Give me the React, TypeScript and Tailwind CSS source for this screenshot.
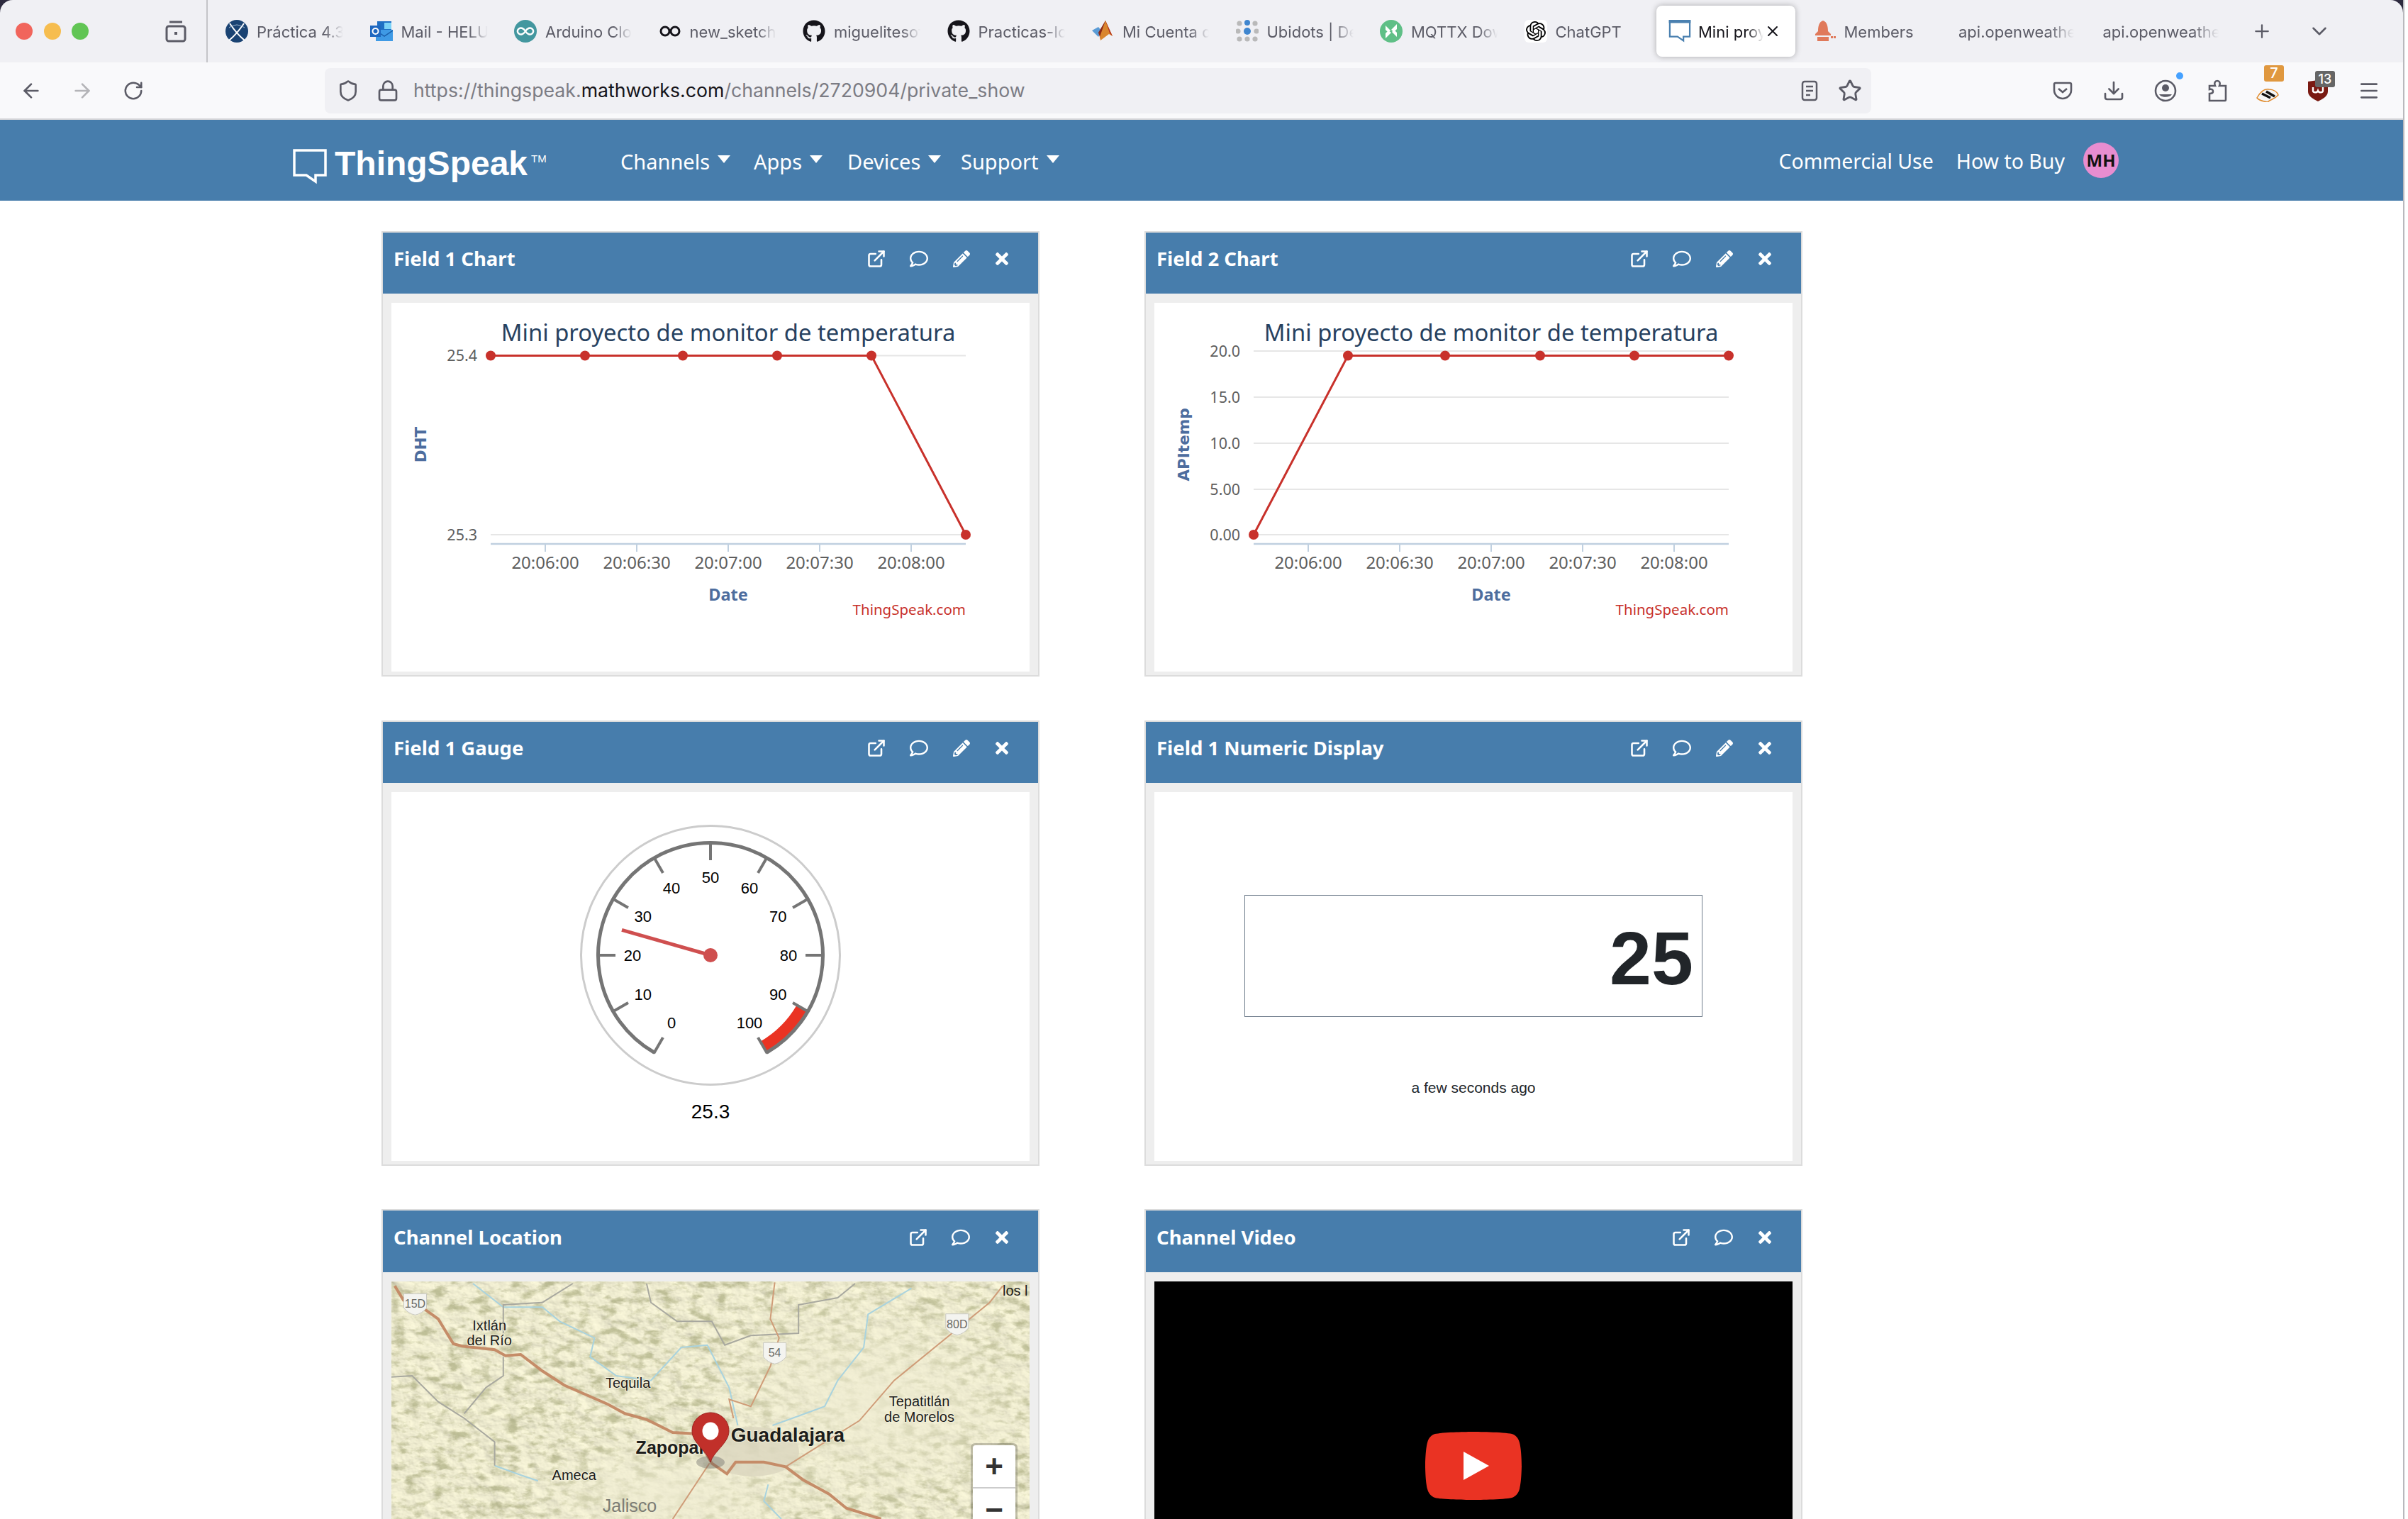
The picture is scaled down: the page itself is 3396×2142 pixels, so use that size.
import { ArrowLeft, ArrowRight, ChevronDown, Download, ExternalLink, Lock, Menu, Plus, RotateCw, Shield, Star, X } from "lucide-react";
import { FaGithub, FaPencilAlt, FaRegComment, FaTimes } from "react-icons/fa";
import { SiOpenai } from "react-icons/si";
import type { ReactNode } from "react";

const tabText = "mt-[3px] font-['Inter',sans-serif] text-[22px] text-[#5b5b66] whitespace-nowrap overflow-hidden [mask-image:linear-gradient(to_right,black_78%,transparent)]";

function ThingSpeakBubble({ className, color, bar }: { className: string; color: string; bar?: boolean }) {
  return (
    <svg viewBox="0 0 48 50" className={className}>
      <path d="M2 2 H46 V37 H32 V46 L19 37 H2 Z" fill="none" stroke={color} strokeWidth="3.5" />
      {bar && <rect x="0" y="0" width="48" height="7" fill={color} />}
    </svg>
  );
}

function Favicon({ kind }: { kind: string }) {
  const cls = "w-8 h-8 shrink-0";
  if (kind === "practica")
    return (
      <svg viewBox="0 0 32 32" className={cls}>
        <circle cx="16" cy="16" r="16" fill="#1a4373" />
        <path d="M6 5 Q16 20 27 29 M26 5 Q16 20 5 29" stroke="#fff" strokeWidth="2" fill="none" />
        <path d="M5 11 Q16 3 27 11" stroke="#9fb6cf" strokeWidth="1" fill="none" />
      </svg>
    );
  if (kind === "outlook")
    return (
      <svg viewBox="0 0 32 32" className={cls}>
        <rect x="10" y="2" width="20" height="15" fill="#1e6fc4" />
        <rect x="20" y="4" width="10" height="9" fill="#7ad2f7" />
        <path d="M8 14 L32 14 L32 30 L8 30 Z" fill="#3f9ae5" />
        <path d="M8 15 L20 23 L32 15" fill="none" stroke="#1a5fab" strokeWidth="1.5" />
        <rect x="0" y="8" width="15" height="16" fill="#1f68c0" />
        <circle cx="7.5" cy="16" r="4" fill="none" stroke="#fff" strokeWidth="2" />
      </svg>
    );
  if (kind === "arduino")
    return (
      <svg viewBox="0 0 32 32" className={cls}>
        <circle cx="16" cy="16" r="16" fill="#43979f" />
        <path d="M16 16 C13 11 9 11 7.5 12 C4 14 4 18 7.5 20 C9 21 13 21 16 16 C19 11 23 11 24.5 12 C28 14 28 18 24.5 20 C23 21 19 21 16 16 Z" fill="none" stroke="#fff" strokeWidth="2.4" />
      </svg>
    );
  if (kind === "sketch")
    return (
      <svg viewBox="0 0 32 32" className={cls}>
        <circle cx="9" cy="16" r="6" fill="none" stroke="#15141a" strokeWidth="3" />
        <circle cx="23" cy="16" r="6" fill="none" stroke="#15141a" strokeWidth="3" />
      </svg>
    );
  if (kind === "github") return <FaGithub className="w-8 h-8 shrink-0 text-[#15141a]" />;
  if (kind === "matlab")
    return (
      <svg viewBox="0 0 32 32" className={cls}>
        <path d="M1 15 L10 10 L15 16 L10 24 Z" fill="#5a9bd5" />
        <path d="M10 18 L20 1 L24 12 L13 27 Z" fill="#8d2a18" />
        <path d="M20 1 L30 23 L25 20 L13 29 L12 24 Z" fill="#d9862e" />
        <path d="M20 1 L30 23 L26 19 Z" fill="#b5341c" />
      </svg>
    );
  if (kind === "ubidots")
    return (
      <svg viewBox="0 0 32 32" className={cls}>
        {[[5, 5], [27, 5], [3, 16], [29, 16], [5, 27], [27, 27], [16, 27]].map(([x, y]) => (
          <circle key={`${x}-${y}`} cx={x} cy={y} r="3.6" fill="#b9b9b9" />
        ))}
        <circle cx="16" cy="4" r="4" fill="#3f86cf" />
        <circle cx="16" cy="16" r="5" fill="#3f86cf" />
      </svg>
    );
  if (kind === "mqttx")
    return (
      <svg viewBox="0 0 32 32" className={cls}>
        <circle cx="16" cy="16" r="16" fill="#5fbf86" />
        <path d="M8 8 L15 15 L12 18 L8 14 Z M24 6 L24 13 L20 17 L16 14 Z M8 26 L8 19 L12 15 L16 18 Z M24 24 L17 17 L20 14 L24 18 Z" fill="#fff" />
      </svg>
    );
  if (kind === "chatgpt")
    return (
      <div className="w-8 h-8 shrink-0 rounded-md bg-white flex items-center justify-center">
        <SiOpenai className="w-7 h-7 text-black" />
      </div>
    );
  if (kind === "mini") return <ThingSpeakBubble className={cls} color="#4a80b0" bar />;
  if (kind === "members")
    return (
      <svg viewBox="0 0 32 32" className={cls}>
        <path d="M14 1 C8 3 7 10 7 16 L3 20 L3 22 L25 22 L25 20 L21 16 C21 10 20 3 14 1 Z" fill="#e0795a" />
        <rect x="6" y="24" width="16" height="6" fill="#e0795a" />
        <rect x="25" y="23" width="3" height="3" fill="#e0795a" />
        <rect x="29" y="23" width="3" height="3" fill="#e0795a" />
      </svg>
    );
  return null;
}

function Tab({ kind, label, active }: { kind?: string; label: string; active?: boolean }) {
  if (active)
    return (
      <div className="w-[196px] h-[72px] mr-[7.5px] pl-[17px] flex items-center rounded-lg bg-white shadow-[0_0_8px_rgba(0,0,0,0.3)]">
        <Favicon kind={kind!} />
        <span className="mt-[3px] ml-[10px] w-[92px] font-['Inter',sans-serif] text-[22px] text-[#15141a] whitespace-nowrap overflow-hidden [mask-image:linear-gradient(to_right,black_75%,transparent)]">{label}</span>
        <X className="w-[24px] h-[24px] ml-px text-[#15141a] shrink-0" strokeWidth={2} />
      </div>
    );
  return (
    <div className="w-[203.5px] h-[72px] pl-[17px] flex items-center gap-3 shrink-0">
      {kind && <Favicon kind={kind} />}
      <span className={`${kind ? "w-[122px]" : "w-[163px] ml-[2px]"} ${tabText}`}>{label}</span>
    </div>
  );
}

function TabBar() {
  return (
    <div className="h-[88px] bg-[#2d2a3e]">
      <div className="h-full flex items-center bg-[#f0f0f4] rounded-t-[18px]">
        <div className="w-[293px] h-full shrink-0 flex items-center border-r-2 border-[#c4c4c8] pl-[22px]">
          <div className="w-[24px] h-[24px] rounded-full bg-[#f1655c]" />
          <div className="w-[24px] h-[24px] rounded-full bg-[#f6bd4f] ml-[16px]" />
          <div className="w-[24px] h-[24px] rounded-full bg-[#61c554] ml-[15px]" />
          <svg viewBox="0 0 32 32" className="w-8 h-8 ml-[107px] text-[#5b5b66]" fill="none" stroke="currentColor" strokeWidth="3">
            <rect x="3" y="9" width="26" height="21" rx="3" />
            <path d="M7 3 H25" />
            <rect x="14" y="17" width="4" height="4" fill="currentColor" stroke="none" />
          </svg>
        </div>
        <div className="flex items-center pl-[8px] h-full">
          <Tab kind="practica" label="Práctica 4.3 Mini" />
          <Tab kind="outlook" label="Mail - HELUS" />
          <Tab kind="arduino" label="Arduino Cloud" />
          <Tab kind="sketch" label="new_sketch_1" />
          <Tab kind="github" label="miguelitesoft" />
          <Tab kind="github" label="Practicas-IoT" />
          <Tab kind="matlab" label="Mi Cuenta de" />
          <Tab kind="ubidots" label="Ubidots | Dev" />
          <Tab kind="mqttx" label="MQTTX Down" />
          <Tab kind="chatgpt" label="ChatGPT" />
          <Tab kind="mini" label="Mini proyecto" active />
          <Tab kind="members" label="Members" />
          <Tab label="api.openweather" />
          <Tab label="api.openweather" />
          <Plus className="w-[30px] h-[30px] text-[#5b5b66] ml-[25px] shrink-0" strokeWidth={1.8} />
          <ChevronDown className="w-[34px] h-[34px] text-[#5b5b66] ml-[49px] shrink-0" strokeWidth={1.8} />
        </div>
      </div>
    </div>
  );
}

function Toolbar() {
  return (
    <div className="h-[81px] bg-[#f9f9fb] border-b-2 border-[#d4d4d8] flex items-center relative">
      <ArrowLeft className="w-8 h-8 ml-[28px] text-[#5b5b66]" strokeWidth={2} />
      <ArrowRight className="w-8 h-8 ml-[40px] text-[#b4b4b8]" strokeWidth={2} />
      <RotateCw className="w-[30px] h-[30px] ml-[41px] text-[#5b5b66]" strokeWidth={2} />
      <div className="ml-[255px] w-[2181px] h-[64px] rounded-lg bg-[#f0f0f4] flex items-center pl-[17px] pr-[13px]">
        <Shield className="w-[32px] h-[32px] text-[#5b5b66]" strokeWidth={2} />
        <Lock className="w-[32px] h-[32px] ml-[24px] text-[#5b5b66]" strokeWidth={2} />
        <div className="ml-[20px] font-['Inter',sans-serif] text-[26.7px] text-[#7c7c84] whitespace-nowrap">
          https://thingspeak.<span className="text-[#15141a]">mathworks.com</span>/channels/2720904/private_show
        </div>
        <svg viewBox="0 0 24 30" className="w-[24px] h-[30px] ml-auto text-[#5b5b66]" fill="none" stroke="currentColor" strokeWidth="2.5">
          <rect x="2" y="2" width="20" height="26" rx="3" />
          <path d="M7 9 H17 M7 15 H17 M7 21 H13" />
        </svg>
        <Star className="w-[34px] h-[34px] ml-[28px] text-[#5b5b66]" strokeWidth={2} />
      </div>
      <div className="ml-[256px] flex items-center relative">
        <svg viewBox="0 0 28 26" className="w-[28px] h-[26px] text-[#5b5b66]" fill="none" stroke="currentColor" strokeWidth="2.6">
          <path d="M4 2 H24 C25.5 2 26 3 26 4 V12 C26 19 20 24 14 24 C8 24 2 19 2 12 V4 C2 3 2.5 2 4 2 Z" />
          <path d="M8 10 L14 15 L20 10" />
        </svg>
        <Download className="w-[32px] h-[32px] ml-[42px] text-[#5b5b66]" strokeWidth={2} />
        <svg viewBox="0 0 32 32" className="w-[32px] h-[32px] ml-[41px] text-[#5b5b66]">
          <circle cx="16" cy="16" r="14" fill="none" stroke="currentColor" strokeWidth="2.6" />
          <circle cx="16" cy="12" r="5" fill="currentColor" />
          <path d="M7 21 H25 C22 26 10 26 7 21 Z" fill="currentColor" />
        </svg>
        <div className="absolute left-[174px] top-[-10px] w-[10px] h-[10px] rounded-full bg-[#45a1ff]" />
        <svg viewBox="0 0 28 32" className="w-[28px] h-[32px] ml-[43px] text-[#5b5b66]" fill="none" stroke="currentColor" strokeWidth="2.6">
          <path d="M3 30 H25 C26 30 26 29 26 28 V9 H17 C19 5 17 2 14 2 C11 2 9 5 11 9 H3 V14 C7 13 8 15 8 17 C8 19 7 20 3 20 Z" />
        </svg>
        <div className="relative ml-[41px] w-[32px] h-[32px]">
          <svg viewBox="0 0 32 32" className="w-[32px] h-[32px]">
            <path d="M1 26 C6 17 12 13 18 14 C25 14 30 18 31 22 C26 28 20 28 16 32 C10 31 4 30 1 26 Z" fill="#f5f5f5" stroke="#e08a2c" strokeWidth="1.5" />
            <path d="M8 20 L20 26 M14 17 L26 24" stroke="#111" strokeWidth="3.5" />
          </svg>
          <div className="absolute left-[11px] top-[-20px] w-[28px] h-[23px] rounded-[3px] bg-[#e0983f] text-white text-[20px] leading-[23px] text-center font-['Inter',sans-serif] font-medium">7</div>
        </div>
        <div className="relative ml-[41px] w-[28px] h-[30px]">
          <svg viewBox="0 0 28 30" className="w-[28px] h-[30px]">
            <path d="M0 2 L14 0 L28 2 V16 C28 23 20 27 14 30 C8 27 0 23 0 16 Z" fill="#7a1a12" />
            <path d="M7 10 V15 C7 18 13 18 14 15 C15 18 21 18 21 15 V10" fill="none" stroke="#fff" strokeWidth="2.4" />
          </svg>
          <div className="absolute left-[10px] top-[-13px] w-[28px] h-[23px] rounded-[3px] bg-[#666666] text-white text-[18px] leading-[23px] text-center font-['Inter',sans-serif] font-medium">13</div>
        </div>
        <Menu className="w-[32px] h-[32px] ml-[42px] text-[#5b5b66]" strokeWidth={2} />
      </div>
    </div>
  );
}

function NavLink({ label, width }: { label: string; width: string }) {
  return (
    <div className={`${width} pt-[3px] flex items-center gap-[11px] text-[29px] text-white`}>
      <span>{label}</span>
      <div className="w-0 h-0 border-x-[9px] border-t-[11px] border-x-transparent border-t-white mb-[6px]" />
    </div>
  );
}

function Nav() {
  return (
    <div className="h-[114px] bg-[#477dac] flex items-center pl-[413px] pr-[401px] font-['Noto_Sans',sans-serif]">
      <div className="w-[462px] h-[64px] flex items-start">
        <ThingSpeakBubble className="w-[48px] h-[50px] mt-[16px] shrink-0" color="#fff" />
        <span className="ml-[11px] mt-[10px] font-['Liberation_Sans',sans-serif] font-bold text-[48px] leading-[54px] text-white">ThingSpeak</span>
        <span className="ml-[5px] mt-[21px] font-['Liberation_Sans',sans-serif] text-[15px] leading-[18px] text-white">TM</span>
      </div>
      <NavLink label="Channels" width="w-[188px]" />
      <NavLink label="Apps" width="w-[132px]" />
      <NavLink label="Devices" width="w-[160px]" />
      <NavLink label="Support" width="w-[150px]" />
      <div className="ml-auto pt-[2px] flex items-center text-[28.5px] text-white">
        <span>Commercial Use</span>
        <span className="ml-[32px]">How to Buy</span>
        <div className="ml-[26px] -mt-[2px] w-[50px] h-[50px] rounded-full bg-[#e88dd0] text-[#111] text-[24px] font-bold flex items-center justify-center">MH</div>
      </div>
    </div>
  );
}

function Card({ title, edit = true, tall, children }: { title: string; edit?: boolean; tall?: boolean; children: ReactNode }) {
  return (
    <div className="h-[628px] border-2 border-[#dcdcdc] bg-[#eeeeee] flex flex-col">
      <div className={`${tall ? "h-[87px] pt-[19px]" : "h-[86px] pt-[18px]"} bg-[#477dac] text-white flex items-start pl-[15px] pr-[39px] shrink-0`}>
        <span className="font-['Noto_Sans',sans-serif] font-bold text-[27.5px] leading-[38px]">{title}</span>
        <div className="ml-auto flex items-center h-[38px]">
          <ExternalLink className="w-[28px] h-[28px]" strokeWidth={2.2} />
          <FaRegComment className="w-[26px] h-[26px] ml-[33px]" />
          {edit && <FaPencilAlt className="w-[24px] h-[24px] ml-[35px]" />}
          <FaTimes className="w-[24px] h-[26px] ml-[33px]" />
        </div>
      </div>
      <div className="flex-1 mx-3 mt-[13px] mb-[5px] bg-white relative overflow-hidden">{children}</div>
    </div>
  );
}

const labelFont = "Noto Sans, sans-serif";
const xTicks = [
  { x: 217, t: "20:06:00" },
  { x: 346, t: "20:06:30" },
  { x: 475, t: "20:07:00" },
  { x: 604, t: "20:07:30" },
  { x: 733, t: "20:08:00" },
];

function Chart({ yLabel, yLabelY, grid, points }: { yLabel: string; yLabelY: number; grid: { y: number; t: string }[]; points: number[][] }) {
  return (
    <svg viewBox="0 0 900 520" className="w-[900px] h-[520px] block">
      <text x="475" y="54" textAnchor="middle" fontFamily={labelFont} fontSize="32.8" fill="#27415f">Mini proyecto de monitor de temperatura</text>
      {grid.map((g) => (
        <g key={g.t}>
          <line x1="140" x2="810" y1={g.y} y2={g.y} stroke="#e6e6e6" strokeWidth="2" />
          <text x="121" y={g.y + 7.5} textAnchor="end" fontFamily={labelFont} fontSize="21.5" fill="#5e5e5e">{g.t}</text>
        </g>
      ))}
      <line x1="140" x2="810" y1="340" y2="340" stroke="#c0d0e0" strokeWidth="2.5" />
      {xTicks.map((t) => (
        <g key={t.t}>
          <line x1={t.x} x2={t.x} y1="340" y2="351" stroke="#c0d0e0" strokeWidth="2" />
          <text x={t.x} y="375" textAnchor="middle" fontFamily={labelFont} fontSize="24" fill="#5e5e5e">{t.t}</text>
        </g>
      ))}
      <text transform={`translate(49 ${yLabelY}) rotate(-90)`} textAnchor="middle" fontFamily="DejaVu Sans, sans-serif" fontWeight="700" fontSize="21.5" fill="#4d6d9e">{yLabel}</text>
      <text x="475" y="420" textAnchor="middle" fontFamily={labelFont} fontWeight="700" fontSize="23.5" fill="#4d6d9e">Date</text>
      <text x="810" y="440" textAnchor="end" fontFamily={labelFont} fontSize="20.5" fill="#c8312b">ThingSpeak.com</text>
      <polyline points={points.map((p) => p.join(",")).join(" ")} fill="none" stroke="#c8312b" strokeWidth="3" />
      {points.map((p) => (
        <circle key={p[0]} cx={p[0]} cy={p[1]} r="7" fill="#c8312b" />
      ))}
    </svg>
  );
}

function polar(r: number, deg: number) {
  const a = (deg * Math.PI) / 180;
  return [450 + r * Math.sin(a), 230 - r * Math.cos(a)];
}

function arcPath(r: number, from: number, to: number) {
  const [x1, y1] = polar(r, from);
  const [x2, y2] = polar(r, to);
  return `M${x1} ${y1} A${r} ${r} 0 ${to - from > 180 ? 1 : 0} 1 ${x2} ${y2}`;
}

function Gauge() {
  const values = [0, 10, 20, 30, 40, 50, 60, 70, 80, 90, 100];
  const [nx, ny] = polar(130, -150 + 3 * 25.3);
  return (
    <svg viewBox="0 0 900 520" className="w-[900px] h-[520px] block">
      <circle cx="450" cy="230" r="182.5" fill="none" stroke="#cccccc" strokeWidth="3" />
      <path d={arcPath(148.5, 120, 150)} fill="none" stroke="#ea3323" strokeWidth="16" />
      <path d={arcPath(158.5, -150, 150)} fill="none" stroke="#757575" strokeWidth="5" />
      {values.map((v) => {
        const deg = -150 + v * 3;
        const [x1, y1] = polar(134, deg);
        const [x2, y2] = polar(160, deg);
        const [tx, ty] = polar(110, deg);
        return (
          <g key={v}>
            <line x1={x1} y1={y1} x2={x2} y2={y2} stroke="#757575" strokeWidth="4" />
            <text x={tx} y={ty + 8} textAnchor="middle" fontFamily="Liberation Sans, sans-serif" fontSize="22" fill="#000">{v}</text>
          </g>
        );
      })}
      <line x1="450" y1="230" x2={nx} y2={ny} stroke="#cf4f4f" strokeWidth="5" />
      <circle cx="450" cy="230" r="10" fill="#cf4f4f" />
      <text x="450" y="460" textAnchor="middle" fontFamily="Liberation Sans, sans-serif" fontSize="28" fill="#000">25.3</text>
    </svg>
  );
}

function NumericDisplay() {
  return (
    <div className="h-full flex flex-col items-center font-['Liberation_Sans',sans-serif]">
      <div className="mt-[145px] w-[646px] h-[172px] border border-[#6f7d8c] flex items-center justify-end pr-[12px] pt-[6px]">
        <span className="text-[106px] font-bold leading-none text-[#212529]">25</span>
      </div>
      <div className="mt-[88px] text-[21px] leading-[24px] text-[#212529]">a few seconds ago</div>
    </div>
  );
}

// positions read off the zoomed crop: x = px / 1.633 - 32, y = py / 3 - 107
const mapPt = ([x, y]: number[]) => `${(x / 1.633 - 32).toFixed(1)},${(y / 3 - 107).toFixed(1)}`;
const line = (pts: number[][]) => pts.map(mapPt).join(" ");

const mainRoad = [[60, 340], [80, 400], [130, 440], [160, 480], [195, 585], [215, 595], [290, 610], [315, 635], [350, 630], [400, 700], [450, 760], [550, 840], [590, 880], [640, 905], [700, 960], [750, 965], [790, 1090], [825, 1135], [845, 1085], [910, 1085], [960, 1105], [1000, 1160], [1060, 1220], [1100, 1280], [1180, 1326]];
const sideRoads = [
  [[935, 325], [925, 480], [945, 560], [925, 680], [880, 850], [830, 820], [840, 900]],
  [[1460, 340], [1430, 410], [1350, 530], [1210, 740], [1130, 910], [1060, 990], [960, 1105]],
  [[785, 1090], [700, 1326]],
];
const rivers = [
  [[240, 330], [310, 430], [400, 430], [440, 490], [520, 560], [510, 640], [570, 720], [650, 740], [720, 600], [780, 590], [830, 770], [850, 930]],
  [[1250, 350], [1150, 460], [1140, 600], [1080, 740], [1050, 850], [990, 890], [930, 930]],
  [[920, 1180], [910, 1250], [950, 1326]],
  [[290, 1100], [350, 1140], [390, 1165]],
];
const borders = [
  [[470, 330], [400, 410], [310, 420], [310, 540]],
  [[640, 330], [650, 410], [710, 490], [790, 490], [820, 590], [880, 550], [990, 540], [990, 420], [1080, 390], [1120, 330]],
  [[52, 725], [100, 720], [160, 830], [220, 900], [290, 1000], [290, 1100]],
  [[310, 640], [310, 720], [270, 770], [220, 880]],
];
const shields = [
  { x: 107, y: 415, t: "15D" },
  { x: 1355, y: 500, t: "80D" },
  { x: 935, y: 622, t: "54" },
];
const places = [
  { x: 278, y: 505, t: "Ixtlán", s: 20 },
  { x: 278, y: 568, t: "del Río", s: 20 },
  { x: 597, y: 748, t: "Tequila", s: 20 },
  { x: 1268, y: 828, t: "Tepatitlán", s: 20 },
  { x: 1268, y: 892, t: "de Morelos", s: 20 },
  { x: 473, y: 1138, t: "Ameca", s: 20 },
  { x: 700, y: 1022, t: "Zapopan", s: 25 },
  { x: 965, y: 968, t: "Guadalajara", s: 28 },
];

function MapView() {
  return (
    <>
      <svg viewBox="0 0 900 340" className="w-[900px] h-[340px] block">
        <defs>
          <filter id="relief" x="0" y="0" width="100%" height="100%">
            <feTurbulence type="fractalNoise" baseFrequency="0.035 0.05" numOctaves="4" seed="7" />
            <feDiffuseLighting surfaceScale="2.5" lightingColor="#f1eed2" diffuseConstant="1.12">
              <feDistantLight azimuth="315" elevation="62" />
            </feDiffuseLighting>
          </filter>
          <filter id="olive" x="0" y="0" width="100%" height="100%" colorInterpolationFilters="sRGB">
            <feTurbulence type="fractalNoise" baseFrequency="0.05 0.09" numOctaves="4" seed="3" />
            <feColorMatrix values="0 0 0 0 0.6  0 0 0 0 0.61  0 0 0 0 0.42  2.6 2 0 0 -2.2" />
          </filter>
          <radialGradient id="flat" cx="0.5" cy="0.5" r="0.5">
            <stop offset="0" stopColor="#efecd2" stopOpacity="0.85" />
            <stop offset="1" stopColor="#efecd2" stopOpacity="0" />
          </radialGradient>
        </defs>
        <rect width="900" height="340" fill="#ecead0" />
        <rect width="900" height="340" filter="url(#relief)" />
        <rect width="900" height="340" filter="url(#olive)" opacity="0.55" />
        <ellipse cx="680" cy="170" rx="260" ry="170" fill="url(#flat)" />
        <ellipse cx="400" cy="300" rx="220" ry="90" fill="url(#flat)" />
        <ellipse cx="510" cy="240" rx="65" ry="35" fill="#dcd7c0" opacity="0.85" />
        {rivers.map((r, i) => (
          <polyline key={i} points={line(r)} fill="none" stroke="#a9d3de" strokeWidth="2" />
        ))}
        {borders.map((r, i) => (
          <polyline key={i} points={line(r)} fill="none" stroke="#a8a89f" strokeWidth="2" />
        ))}
        {sideRoads.map((r, i) => (
          <polyline key={i} points={line(r)} fill="none" stroke="#cf9c78" strokeWidth="2" />
        ))}
        <polyline points={line(mainRoad)} fill="none" stroke="#c58c68" strokeWidth="4" />
        {shields.map((s) => {
          const [x, y] = mapPt([s.x, s.y]).split(",").map(Number);
          return (
            <g key={s.t}>
              <path d={`M${x - 16} ${y - 14} H${x + 16} V${y + 6} Q${x + 10} ${y + 14} ${x} ${y + 16} Q${x - 10} ${y + 14} ${x - 16} ${y + 6} Z`} fill="#f4f4f0" stroke="#c9c9c2" />
              <text x={x} y={y + 6} textAnchor="middle" fontFamily="Liberation Sans, sans-serif" fontSize="16" fill="#6a6a66">{s.t}</text>
            </g>
          );
        })}
        {places.map((p) => {
          const [x, y] = mapPt([p.x, p.y]).split(",").map(Number);
          return (
            <text key={p.t} x={x} y={y + p.s * 0.36} textAnchor="middle" fontFamily="Liberation Sans, sans-serif" fontWeight={p.s > 20 ? 700 : 400} fontSize={p.s} fill="#1d1d1b" stroke="#f3f0da" strokeWidth="2" paintOrder="stroke">{p.t}</text>
          );
        })}
        <text x="336" y="325" textAnchor="middle" fontFamily="Liberation Sans, sans-serif" fontSize="25" fill="#7c7c74">Jalisco</text>
        <text x="862" y="20" fontFamily="Liberation Sans, sans-serif" fontSize="20" fill="#1d1d1b">los l</text>
        <ellipse cx="450" cy="255" rx="20" ry="9" fill="#555" opacity="0.35" />
        <path d="M450 255 C446 240 424 228 424 211 C424 196 436 185 450 185 C464 185 476 196 476 211 C476 228 454 240 450 255 Z" fill="#c1302a" stroke="#9c2420" strokeWidth="1" />
        <ellipse cx="450" cy="211" rx="11.5" ry="12.5" fill="#fff" />
      </svg>
      <div className="absolute left-[817px] top-[228px] w-[66px] h-[130px] rounded-md bg-black/20 p-[3px]">
        <div className="h-full rounded bg-white font-['Liberation_Sans',sans-serif] font-bold text-[#333] text-[44px] leading-[60px] text-center">
          <div className="h-[61px] border-b-2 border-[#cccccc]">+</div>
          <div>−</div>
        </div>
      </div>
    </>
  );
}

function VideoView() {
  return (
    <div className="h-full bg-black flex justify-center pt-[212px]">
      <svg viewBox="0 0 68 48" className="w-[136px] h-[96px]">
        <path d="M66.52,7.74c-0.78-2.93-2.49-5.41-5.42-6.19C55.79,.13,34,0,34,0S12.21,.13,6.9,1.55C3.97,2.33,2.27,4.81,1.48,7.74C0.06,13.05,0,24,0,24s0.06,10.95,1.48,16.26c0.78,2.93,2.49,5.41,5.42,6.19C12.21,47.87,34,48,34,48s21.79-0.13,27.1-1.55c2.93-0.78,4.64-3.26,5.42-6.19C67.94,34.95,68,24,68,24S67.94,13.05,66.52,7.74z" fill="#ea3323" />
        <path d="M45 24 27 14 27 34" fill="#fff" />
      </svg>
    </div>
  );
}

const chart1 = [[140, 74.5], [273, 74.5], [411, 74.5], [544, 74.5], [677, 74.5], [810, 327]];
const chart2 = [[140, 327], [273, 74.5], [410, 74.5], [544, 74.5], [677, 74.5], [810, 74.5]];

export default function App() {
  return (
    <div className="h-[2142px] overflow-hidden bg-white">
      <div className="w-[3391px] h-full border-r-2 border-[#b9b9bd]">
        <TabBar />
        <Toolbar />
        <Nav />
        <main className="grid grid-cols-[928px_928px] gap-x-[148px] gap-y-[62px] pl-[538px] pt-[43px]">
          <Card title="Field 1 Chart">
            <Chart yLabel="DHT" yLabelY={200} grid={[{ y: 74.5, t: "25.4" }, { y: 327, t: "25.3" }]} points={chart1} />
          </Card>
          <Card title="Field 2 Chart">
            <Chart
              yLabel="APItemp"
              yLabelY={200}
              grid={[{ y: 68, t: "20.0" }, { y: 133, t: "15.0" }, { y: 198, t: "10.0" }, { y: 263, t: "5.00" }, { y: 327, t: "0.00" }]}
              points={chart2}
            />
          </Card>
          <Card title="Field 1 Gauge">
            <Gauge />
          </Card>
          <Card title="Field 1 Numeric Display">
            <NumericDisplay />
          </Card>
          <div className="-mt-px">
            <Card title="Channel Location" edit={false} tall>
              <MapView />
            </Card>
          </div>
          <div className="-mt-px">
            <Card title="Channel Video" edit={false} tall>
              <VideoView />
            </Card>
          </div>
        </main>
      </div>
    </div>
  );
}
